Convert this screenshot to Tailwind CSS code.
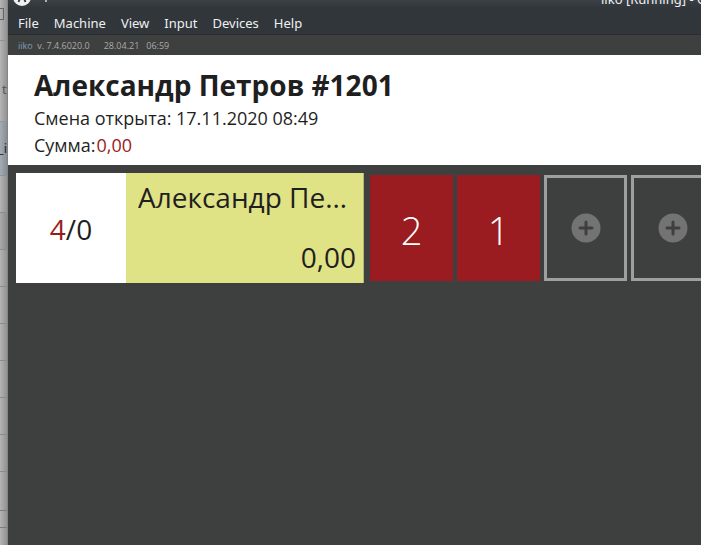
<!DOCTYPE html>
<html lang="ru">
<head>
<meta charset="utf-8">
<title>iiko [Running]</title>
<script src="https://cdn.jsdelivr.net/npm/@tailwindcss/browser@4"></script>
</head>
<body class="flex h-screen overflow-hidden bg-[#3e403f] font-['Noto_Sans','Open_Sans',sans-serif] text-[#1f1f1f]">
  <aside class="flex w-2 shrink-0 flex-col overflow-hidden whitespace-nowrap border-r border-[#858585] bg-linear-to-r from-[#b4b4b4] to-[#929292] text-[13px]">
    <div class="flex h-[41px] shrink-0 items-center border-b border-[#8f9499]">
      <span class="mt-[-12px] h-3 w-1 border border-l-0 border-[#62666b]"></span>
    </div>
    <div class="flex h-[81px] shrink-0 items-end border-b border-[#8798a8] pb-5 pl-[2px] leading-6 text-[#55585c]">ta</div>
    <div class="flex h-[54px] shrink-0 items-center justify-end border-b border-[#8c949b] bg-linear-to-r from-[#a5acb4] to-[#878d94] text-[#22262c]">_i</div>
    <div class="h-[37px] shrink-0 border-b border-[#8c8c8c]"></div>
    <div class="h-[37px] shrink-0 border-b border-[#8c8c8c] bg-black/5"></div>
    <div class="h-[37px] shrink-0 border-b border-[#8c8c8c]"></div>
    <div class="h-[37px] shrink-0 border-b border-[#8c8c8c]"></div>
    <div class="h-[37px] shrink-0 border-b border-[#8c8c8c]"></div>
    <div class="h-[37px] shrink-0 border-b border-[#8c8c8c]"></div>
    <div class="h-[37px] shrink-0 border-b border-[#8c8c8c]"></div>
    <div class="h-[37px] shrink-0 border-b border-[#8c8c8c]"></div>
    <div class="h-[39px] shrink-0 border-b border-[#7c7c7c]"></div>
    <div class="h-[17px] shrink-0 border-b border-[#7c7c7c]"></div>
  </aside>

  <div class="flex min-w-0 flex-1 flex-col">
    <header class="border-b border-[#282c2f] bg-[#31363b] text-[#eff0f1]">
      <div class="flex h-2 items-end justify-between overflow-hidden bg-linear-to-b from-[#3a4045] to-[#31363b]">
        <div class="flex items-end gap-3 pl-1">
          <svg class="mb-px size-5" viewBox="0 0 20 20" aria-hidden="true"><circle cx="10" cy="10" r="9" fill="#eff0f1"/><path d="M6.500 15l3.500-8 3.500 8" fill="none" stroke="#31363b" stroke-width="1.800"/></svg>
          <svg class="mb-[6px] h-2 w-1" viewBox="0 0 4 8" aria-hidden="true"><path d="M2 2v6" stroke="#aeb2b5" stroke-width="2"/></svg>
        </div>
        <div class="flex w-[100px] shrink-0 whitespace-nowrap text-[13px] leading-[18px]">iiko [Running] - Oracle VM VirtualBox</div>
      </div>
      <nav class="flex h-[26px] gap-[15px] pl-[10px] text-[13px] leading-[30px]">
        <button type="button">File</button>
        <button type="button">Machine</button>
        <button type="button">View</button>
        <button type="button">Input</button>
        <button type="button">Devices</button>
        <button type="button">Help</button>
      </nav>
    </header>

    <div class="flex h-5 items-center gap-[14px] pl-[10px] pt-px font-['Open_Sans',sans-serif] text-[9px] text-[#aaaaaa]">
      <span><a href="#" class="text-[#7f9db5]">iiko</a>&nbsp; v. 7.4.6020.0</span>
      <span>28.04.21 &nbsp; 06:59</span>
    </div>

    <section class="h-[110px] bg-white pl-[26px] pt-[10px] font-['Open_Sans',sans-serif] text-[18px] leading-[27px]">
      <h1 class="text-[28px] font-bold leading-10">Александр Петров #1201</h1>
      <p>Смена открыта: 17.11.2020 08:49</p>
      <p class="flex gap-px">Сумма:<span class="text-[#9a1c20]">0,00</span></p>
    </section>

    <main class="flex gap-[6px] overflow-hidden pl-2 pt-2 font-['Open_Sans',sans-serif]">
      <button type="button" class="flex h-[110px] w-[348px] shrink-0 text-[28px] leading-9">
        <span class="flex h-full w-[110px] items-center justify-center bg-white pt-[2px]"><span class="text-[#9a1c20]">4</span>/0</span>
        <span class="flex h-full min-w-0 flex-1 flex-col justify-between border-r border-[#b5b86c] bg-[#dfe285] pb-2 pl-3 pr-[7px] pt-[6px]">
          <span class="w-[212px] truncate text-left">Александр Петров</span>
          <span class="text-right">0,00</span>
        </span>
      </button>
      <div class="flex gap-1 pt-[2px]">
        <button type="button" class="h-[106px] w-[83px] shrink-0 bg-[#9a1c20] pt-1 text-[38px] font-light text-white">2</button>
        <button type="button" class="h-[106px] w-[83px] shrink-0 bg-[#9a1c20] pt-1 text-[38px] font-light text-white">1</button>
        <button type="button" aria-label="Добавить" class="flex h-[106px] w-[83px] shrink-0 items-center justify-center border-3 border-[#9f9f9f]">
          <svg class="size-[30px]" viewBox="0 0 30 30" aria-hidden="true"><circle cx="15" cy="15" r="14.500" fill="#737373"/><path d="M15 9v12M9 15h12" stroke="#3e403f" stroke-width="3" stroke-linecap="round"/></svg>
        </button>
        <button type="button" aria-label="Добавить" class="flex h-[106px] w-[83px] shrink-0 items-center justify-center border-3 border-[#9f9f9f]">
          <svg class="size-[30px]" viewBox="0 0 30 30" aria-hidden="true"><circle cx="15" cy="15" r="14.500" fill="#737373"/><path d="M15 9v12M9 15h12" stroke="#3e403f" stroke-width="3" stroke-linecap="round"/></svg>
        </button>
      </div>
    </main>
  </div>
</body>
</html>
